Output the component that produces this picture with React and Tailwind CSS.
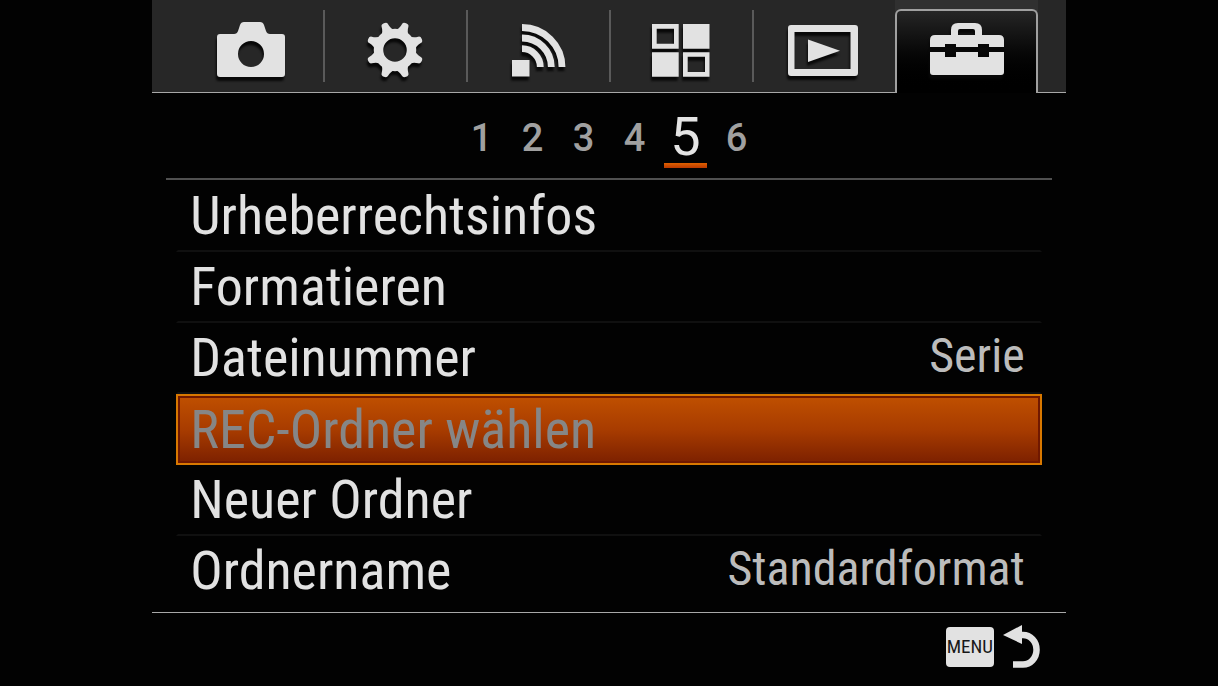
import { useState } from "react";

const CameraIcon = () => (
  <path
    fillRule="evenodd"
    d="M9 24H23Q26 24 27 21L29 15Q30 12 33 12H49Q52 12 53 15L55 21Q56 24 59 24H71Q74 24 74 27V64Q74 67 71 67H9Q6 67 6 64V27Q6 24 9 24ZM40 31A13 13 0 1 0 40 57A13 13 0 1 0 40 31Z"
  />
);

const teeth = [22.5, 67.5, 112.5, 157.5, 202.5, 247.5, 292.5, 337.5];

const GearIcon = () => (
  <>
    <circle cx="40" cy="40" r="16.5" fill="none" stroke="currentColor" strokeWidth="9.5" />
    {teeth.map((angle) => (
      <path
        key={angle}
        transform={`rotate(${angle} 40 40)`}
        d="M32 22Q36 19 36.5 13.5Q36.7 11 40 11Q43.3 11 43.5 13.5Q44 19 48 22Z"
      />
    ))}
  </>
);

const WirelessIcon = () => (
  <>
    <rect x="14" y="50" width="17.5" height="16.5" />
    <g fill="none" stroke="currentColor" strokeWidth="6.8">
      <path d="M24 17.5A40 39.5 0 0 1 64 57" />
      <path d="M24 28A29.3 29 0 0 1 53.3 57" />
      <path d="M24 38.7A18.3 18.3 0 0 1 42.3 57" />
    </g>
  </>
);

const AppsIcon = () => (
  <path
    fillRule="evenodd"
    d="M12 14H38.7V38.7H12ZM16.7 18.7V33.7H34V18.7ZM43 14H69.5V38.7H43ZM12 42.3H38.7V66.7H12ZM43 42.3H69.5V66.7H43ZM47.7 46.7V62H65V46.7Z"
  />
);

const PlaybackIcon = () => (
  <>
    <path
      fillRule="evenodd"
      d="M8 15H72Q75 15 75 18V63Q75 66 72 66H8Q5 66 5 63V18Q5 15 8 15ZM11.5 22V59H67.5V22Z"
    />
    <path d="M25 29.5L57 40.7L25 52Z" />
  </>
);

const ToolboxIcon = () => (
  <g transform="translate(2 0)">
    <path
      fillRule="evenodd"
      d="M3 36V29Q3 24 8 24H24V19Q24 12 31 12H48Q55 12 55 19V24H72Q77 24 77 29V36H62V33H51V36H29V33H18V36ZM31 24H48V20Q48 18 46 18H33Q31 18 31 20Z"
    />
    <path d="M3 41H18V46H29V41H51V46H62V41H77V61Q77 64 74 64H6Q3 64 3 61Z" />
  </g>
);

const tabs = [
  { id: "camera", label: "Kamera", Icon: CameraIcon },
  { id: "settings", label: "Einstellungen", Icon: GearIcon },
  { id: "wireless", label: "Drahtlos", Icon: WirelessIcon },
  { id: "apps", label: "Applikationen", Icon: AppsIcon },
  { id: "playback", label: "Wiedergabe", Icon: PlaybackIcon },
  { id: "setup", label: "Setup", Icon: ToolboxIcon },
];

const pages = [1, 2, 3, 4, 5, 6];

const items = [
  { label: "Urheberrechtsinfos" },
  { label: "Formatieren" },
  { label: "Dateinummer", value: "Serie" },
  { label: "REC-Ordner wählen", disabled: true },
  { label: "Neuer Ordner" },
  { label: "Ordnername", value: "Standardformat" },
];

const TabIcon = ({ children }) => (
  <svg
    viewBox="1 0 80 72"
    fill="currentColor"
    className="h-[72px] w-20 overflow-visible text-[#e2e2e2] drop-shadow-[-1px_4px_1px_#080808]"
    aria-hidden="true"
  >
    {children}
  </svg>
);

const TabBar = ({ active, onChange }) => (
  <nav className="flex h-[93px] bg-[#272727]">
    <div className="w-7 border-b border-[#a8a8a8]" />
    {tabs.map(({ id, label, Icon }, i) => {
      if (id === active) {
        return (
          <div key={id} className="flex-1 bg-[#303030] pt-[9px]">
            <button
              aria-label={label}
              aria-current="true"
              className="flex h-full w-full justify-center rounded-t-md border-x-2 border-t-2 border-[#a0a0a0] bg-linear-to-b from-[#262626] via-[#080808] via-50% to-black"
            >
              <TabIcon>
                <Icon />
              </TabIcon>
            </button>
          </div>
        );
      }
      const divider = i > 0 && tabs[i - 1].id !== active;
      return (
        <div key={id} className="flex-1 border-b border-[#a8a8a8] py-[10px]">
          <button
            aria-label={label}
            onClick={() => onChange(id)}
            className={`flex w-full justify-center ${divider ? "border-l-2 border-[#5a5a5a]" : ""}`}
          >
            <TabIcon>
              <Icon />
            </TabIcon>
          </button>
        </div>
      );
    })}
    <div className="w-7 border-b border-[#a8a8a8]" />
  </nav>
);

const Pager = ({ active, onChange }) => (
  <div className="mx-[14px] flex h-[87px] justify-center border-b-2 border-[#505050] font-['Roboto','Liberation_Sans',sans-serif]">
    {pages.map((page) => (
      <button
        key={page}
        onClick={() => onChange(page)}
        className={
          page === active
            ? "flex w-[51px] flex-col items-center pt-[18px] text-[54px] leading-[52px] text-[#e4e4e4]"
            : "w-[51px] pb-[6px] pt-[10px] text-[38px] font-medium leading-[70px] text-[#a0a0a0]"
        }
      >
        {page}
        {page === active && (
          <span className="h-[5px] w-[43px] bg-linear-to-b from-[#e06000] to-[#b83800]" />
        )}
      </button>
    ))}
  </div>
);

const MenuItem = ({ item, selected, last, onSelect }) => {
  const frame = selected
    ? "border-2 border-[#d87800] bg-linear-to-b from-[#c05000] via-[#a83c00] via-50% to-[#7c2000] text-[#868686] shadow-[inset_0_0_0_2px_#701800]"
    : `border-x-2 border-b-2 border-x-transparent text-[#e2e2e2] ${last ? "border-b-transparent" : "border-b-[#101010]"}`;

  return (
    <li>
      <button
        onClick={onSelect}
        aria-disabled={item.disabled}
        className={`flex h-[71px] w-full items-center justify-between pl-3 pr-[15px] ${frame}`}
      >
        <span className="text-[54px] leading-[60px]">{item.label}</span>
        {item.value && (
          <span className="pb-1 text-[48px] leading-[60px] text-[#bcbcbc]">{item.value}</span>
        )}
      </button>
    </li>
  );
};

export default function App() {
  const [tab, setTab] = useState("setup");
  const [page, setPage] = useState(5);
  const [selected, setSelected] = useState(3);

  return (
    <div className="min-h-screen bg-[#020202] font-['Roboto_Condensed','Liberation_Sans_Narrow','Liberation_Sans',sans-serif]">
      <div className="mx-auto w-3/4">
        <TabBar active={tab} onChange={setTab} />
        <Pager active={page} onChange={setPage} />

        <ul className="px-6 pb-[5px] pt-px">
          {items.map((item, i) => (
            <MenuItem
              key={item.label}
              item={item}
              selected={i === selected}
              last={i === items.length - 1}
              onSelect={() => setSelected(i)}
            />
          ))}
        </ul>

        <footer className="flex justify-end border-t border-[#a8a8a8] pr-[26px] pt-[11px]">
          <button aria-label="MENU Zurück" className="flex items-center gap-2">
            <span className="flex h-10 w-12 items-center justify-center rounded bg-[#e2e2e2] text-[19px] text-[#181818]">
              MENU
            </span>
            <svg viewBox="0 0 38 46" className="h-[46px] w-[38px] text-[#e2e2e2]" aria-hidden="true">
              <path d="M1 11L20 1V20Z" fill="currentColor" />
              <path
                d="M18 11H21A13.5 14.7 0 0 1 21 40.5H11"
                fill="none"
                stroke="currentColor"
                strokeWidth="6.5"
              />
            </svg>
          </button>
        </footer>
      </div>
    </div>
  );
}
